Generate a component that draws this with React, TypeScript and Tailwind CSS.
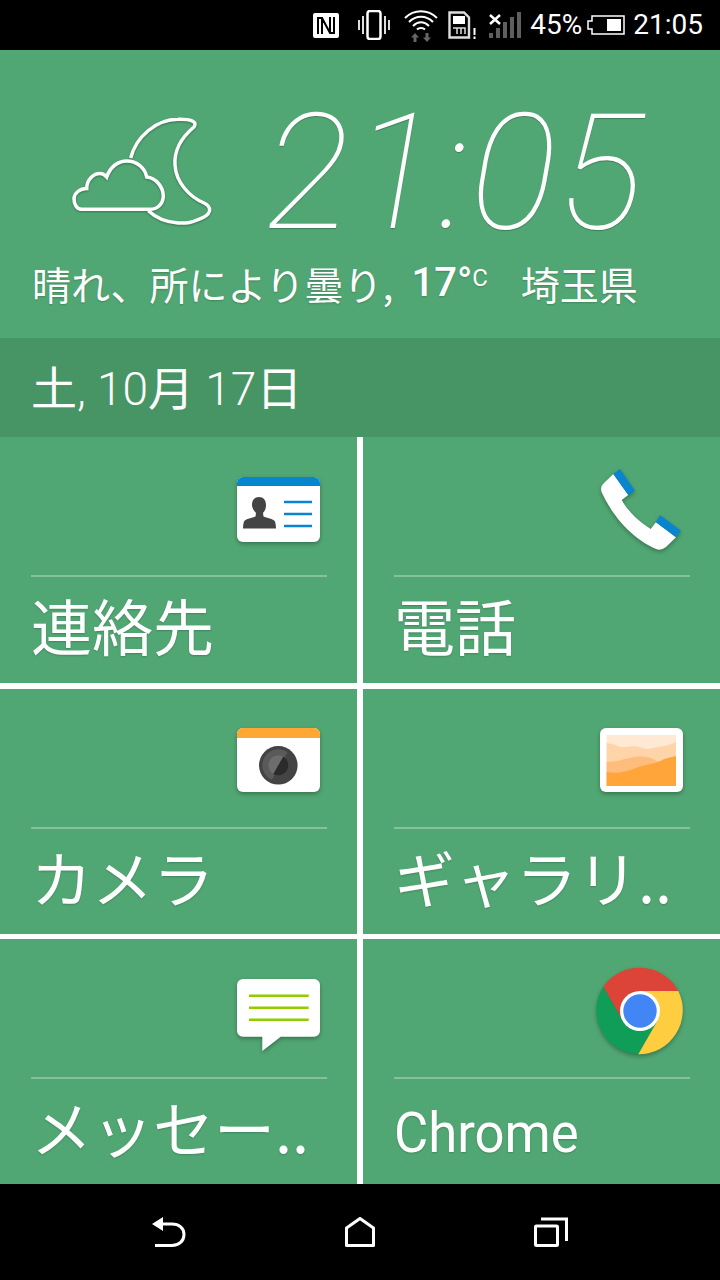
const tiles = [
  { label: "連絡先", icon: "contacts" },
  { label: "電話", icon: "phone" },
  { label: "カメラ", icon: "camera" },
  { label: "ギャラリ..", icon: "gallery" },
  { label: "メッセー..", icon: "messages" },
  { label: "Chrome", icon: "chrome" },
];

function TileIcon({ name }: { name: string }) {
  return (
    <svg viewBox="0 0 100 100" className="w-[100px] h-[100px] drop-shadow-[0_2px_2px_rgba(0,0,0,0.3)]">
      {name === "contacts" && (
        <>
          <rect x="10" y="17" width="83" height="65" rx="6" fill="#fff" />
          <path d="M10 26V23a6 6 0 0 1 6-6h71a6 6 0 0 1 6 6v3z" fill="#0984cf" />
          <path d="M25 45c0-5 2.500-8 7-8s7 3 7 8c0 3-1 6-3 8l.5 3.500c3 1.500 10 2 11.500 5 .7 2 1 5 1 7H16c0-2 .3-5 1-7 1.500-3 8.500-3.500 11.500-5L29 53c-2-2-4-5-4-8z" fill="#444" />
          <path d="M57 42h28M57 54h28M57 66h28" stroke="#0984cf" strokeWidth="2.600" />
        </>
      )}
      {name === "phone" && (
        <>
          <path d="M23.300 14L13 24Q9 28 13 35C25 60 45 80 66 89Q71 91 76 87L86 77.300L66 62.300L60.700 69C50 62 38 52 31.700 40L38.300 35Z" fill="#fff" />
          <path d="M23.300 14L30 9L45 30.700L38.300 35Z" fill="#0984cf" />
          <path d="M66 62.300L70 55L91 70.700L86 77.300Z" fill="#0984cf" />
        </>
      )}
      {name === "camera" && (
        <>
          <rect x="10" y="16" width="83" height="64" rx="6" fill="#fff" />
          <path d="M10 26V22a6 6 0 0 1 6-6h71a6 6 0 0 1 6 6v4z" fill="#ffa733" />
          <circle cx="51.300" cy="53.300" r="19.300" fill="#434343" />
          <circle cx="51.300" cy="53.300" r="16" fill="#5a5a5a" />
          <circle cx="51.300" cy="53.300" r="10" fill="#6d6d6d" />
          <path d="M61 39.500L44.500 68.500a16 16 0 0 0 16.500-29z" fill="#444" />
          <path d="M56.300 44.600L46.300 62a10 10 0 0 0 10-17.400z" fill="#2b2b2b" />
        </>
      )}
      {name === "gallery" && (
        <>
          <rect x="10" y="16" width="83" height="64" rx="6" fill="#fff" />
          <rect x="16.700" y="23" width="69.300" height="51" fill="#ffe9d4" />
          <path d="M16.700 31C24 31 28 36 36 35C42 34 48 34 52 36C58 38 62 36 68 35C74 34 80 33 86 30V74H16.700z" fill="#ffd4a8" />
          <path d="M16.700 50C26 50 34 47 44 45C52 43 62 45 70 51H86V74H16.700z" fill="#ffbd7c" />
          <path d="M16.700 60C26 62 36 60 46 56C56 52 66 52 74 47C78 46 82 45 86 44V74H16.700z" fill="#ffa53a" />
        </>
      )}
      {name === "messages" && (
        <>
          <path d="M16 17H87a6 6 0 0 1 6 6V68.700a6 6 0 0 1-6 6H53.700L35.300 89V74.700H16a6 6 0 0 1-6-6V23a6 6 0 0 1 6-6z" fill="#fff" />
          <path d="M22 33.700h59.700M22 45.700h59.700M22 57.700h59.700" stroke="#8fcc00" strokeWidth="2.400" />
        </>
      )}
      {name === "chrome" && (
        <g transform="translate(50 49)">
          <path d="M-36.700 -24.300A44 44 0 0 1 38.300 -20H0L-17.300 10Z" fill="#db4437" />
          <path d="M-36.700 -24.300A44 44 0 0 0 -1.700 43.300L17.300 10H-17.300Z" fill="#0f9d58" />
          <path d="M38.300 -20A44 44 0 0 1 -1.700 43.300L17.300 10L0 -20Z" fill="#ffcd40" />
          <circle r="20" fill="#fff" />
          <circle r="16.700" fill="#4285f4" />
        </g>
      )}
    </svg>
  );
}

function Tile({ label, icon }: { label: string; icon: string }) {
  const latin = label === "Chrome";
  return (
    <div className="bg-[#51a773] flex flex-col min-w-0 pl-[31px] pr-[30px]">
      <div className="h-[138px] pt-[23px] flex justify-end shrink-0">
        <TileIcon name={icon} />
      </div>
      <div className="h-[2px] bg-white/30 shrink-0" />
      {latin ? (
        <div className="font-['Roboto'] text-[56px] leading-[108px] text-white whitespace-nowrap origin-left scale-x-[0.94] [text-shadow:0_1px_2px_rgba(0,0,0,0.2)]">
          {label}
        </div>
      ) : (
        <div className="font-['Noto_Sans_CJK_JP'] font-normal text-[61px] leading-[96px] text-white whitespace-nowrap [text-shadow:0_1px_2px_rgba(0,0,0,0.2)]">
          {label}
        </div>
      )}
    </div>
  );
}

function StatusBar() {
  return (
    <div className="h-[50px] bg-black flex items-center justify-end pr-[17px] text-white font-['Roboto'] text-[28px]">
      {/* NFC */}
      <svg viewBox="0 0 26 25" className="w-[26px] h-[25px]">
        <rect width="26" height="25" rx="2" fill="#fff" />
        <path d="M5 21V5h4l8 15M21 4v16h-4L9 5M9 5v16M17 4v16" stroke="#000" strokeWidth="2" fill="none" />
      </svg>
      {/* vibrate */}
      <svg viewBox="0 0 32 30" className="w-[32px] h-[30px] ml-[19px]" fill="none" stroke="#ddd" strokeWidth="2">
        <rect x="9.500" y="1" width="13" height="28" rx="2.500" strokeWidth="2.500" stroke="#fff" />
        <path d="M1 10v10M5 6v18M27 6v18M31 10v10" />
      </svg>
      {/* wifi */}
      <svg viewBox="0 0 34 33" className="w-[34px] h-[33px] ml-[14px]" fill="none" stroke="#fff" strokeWidth="2">
        <path d="M1 9C10 0 24 0 33 9" />
        <path d="M5 13C12 6 22 6 29 13" />
        <path d="M9 17C14 12 20 12 25 17" />
        <path d="M13 20.500C15 18.500 19 18.500 21 20.500" />
        <path d="M11 24l-4 4.500h2.500V33h3v-4.500H15zM23 33l4-4.500h-2.500V24h-3v4.500H19z" fill="#666" stroke="none" />
      </svg>
      {/* sim */}
      <svg viewBox="0 0 29 28" className="w-[29px] h-[28px] ml-[10px]" fill="none" stroke="#ddd">
        <path d="M1.500 1.500H16L21 6.500V26.500H1.500Z" strokeWidth="2.400" />
        <rect x="5" y="5" width="12" height="8" fill="#fff" stroke="none" />
        <path d="M5 17H17V23M9 17V23M13 17V23" strokeWidth="1.500" />
        <path d="M26.500 17V24M26.500 25.500V28" stroke="#fff" strokeWidth="2" />
      </svg>
      {/* signal */}
      <svg viewBox="0 0 32 28" className="w-[32px] h-[28px] ml-[12px]">
        <path d="M1 4l10 9M11 4L1 13" stroke="#fff" strokeWidth="2.500" />
        <rect x="0" y="22" width="4" height="5" fill="#5f5f5f" />
        <rect x="7" y="17" width="4" height="10" fill="#5f5f5f" />
        <rect x="14" y="11" width="4" height="16" fill="#5f5f5f" />
        <rect x="21" y="6" width="4" height="21" fill="#5f5f5f" />
        <rect x="28" y="1" width="4" height="26" fill="#5f5f5f" />
      </svg>
      <span className="ml-[9px] leading-none">45%</span>
      {/* battery */}
      <svg viewBox="0 0 38 20" className="w-[38px] h-[20px] ml-[5px]" fill="none">
        <path d="M5 1H37V19H5V14H1V6H5Z" stroke="#fff" strokeWidth="1.500" />
        <rect x="20" y="4" width="14" height="12" fill="#fff" />
      </svg>
      <span className="ml-[8px] leading-none">21:05</span>
    </div>
  );
}

function Weather() {
  return (
    <div className="h-[288px] bg-[#51a773] text-white">
      <div className="h-[199px] flex">
        <div className="w-[265px] pl-[70px] pt-[65px] shrink-0">
          <svg viewBox="0 0 145 112" className="w-[145px] h-[112px] drop-shadow-[0_1px_1px_rgba(0,0,0,0.3)]" fill="none" stroke="#fff" strokeWidth="3.500">
            <path d="M11.700 94.300C6 94.300 4 88 4 84C4 78 10 73.500 16.700 73.500C16.700 64 24 58.500 30 58.500C32 58.500 35 60 36.700 62C40 52 48 46 56.700 46C67 46 75 53 76.700 62C86 63 93.300 72 93.300 81C93.300 89 87 94.300 80 94.300Z" />
            <path d="M60.700 43C66 22 86 4.300 108 4.300C120 4 128 6 124 12C112 22 104 35 105 50C106 68 120 82 134 88C142 92 141 98 134 102C122 108 116 108.500 108 108C96 107 86 103 78.300 95.700" />
          </svg>
        </div>
        <div className="font-['Roboto'] font-thin italic text-[161px] leading-[150px] pt-[48px] tracking-[2px] whitespace-nowrap [text-shadow:0_1px_1px_rgba(0,0,0,0.25)]">
          21:05
        </div>
      </div>
      <div className="flex items-center pl-[32px] h-[68px] text-[39px] whitespace-nowrap font-['Noto_Sans_CJK_JP'] font-normal [text-shadow:0_1px_2px_rgba(0,0,0,0.2)]">
        <span>晴れ、所により曇り,</span>
        <span className="font-['Roboto'] font-medium text-[40px] ml-[18px]">17°</span>
        <span className="font-['Roboto'] text-[24px] self-start mt-[11px]">C</span>
        <span className="ml-[33px]">埼玉県</span>
      </div>
    </div>
  );
}

export default function App() {
  return (
    <div className="w-[720px] h-[1280px] flex flex-col bg-black overflow-hidden">
      <StatusBar />
      <Weather />

      <div className="h-[99px] bg-[#479464] flex items-center pl-[31px] text-white text-[46px] whitespace-nowrap font-['Roboto'] font-light">
        <div>
          <span className="font-['Noto_Sans_CJK_JP'] font-normal">土</span>
          <span>,&nbsp;10</span>
          <span className="font-['Noto_Sans_CJK_JP'] font-normal">月</span>
          <span>&nbsp;17</span>
          <span className="font-['Noto_Sans_CJK_JP'] font-normal">日</span>
        </div>
      </div>

      <div className="h-[747px] bg-white grid grid-cols-[357px_357px] grid-rows-[246px_245px_245px] gap-x-[6px] gap-y-[5.500px]">
        {tiles.map((t) => (
          <Tile key={t.label} label={t.label} icon={t.icon} />
        ))}
      </div>

      <div className="flex-1 bg-black grid grid-cols-3 px-[73px] place-items-center">
        <svg viewBox="0 0 34 30" className="w-[34px] h-[30px]" fill="none" stroke="#fff" strokeWidth="3">
          <path d="M3 28.500H20C27 28.500 32 24 32 17.500C32 11 27 7 20 7H8" />
          <path d="M0 7L11 0V14Z" fill="#fff" stroke="none" />
        </svg>
        <svg viewBox="0 0 30 30" className="w-[30px] h-[30px]" fill="none" stroke="#fff" strokeWidth="3" strokeLinejoin="round">
          <path d="M15 1.500L28.500 11V28.500H1.500V11Z" />
        </svg>
        <svg viewBox="0 0 34 30" className="w-[34px] h-[30px]" fill="none" stroke="#fff" strokeWidth="3">
          <rect x="1.500" y="9" width="22" height="19.500" rx="1" />
          <path d="M7 2H32.500V24" />
        </svg>
      </div>
    </div>
  );
}
